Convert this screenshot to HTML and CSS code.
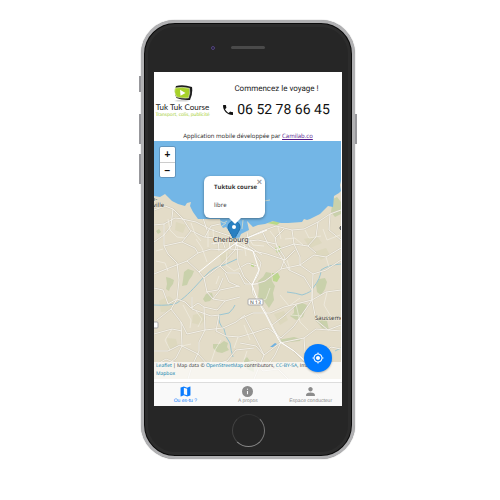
FILE: index.html
```html
<!DOCTYPE html>
<html lang="fr">
<head>
<meta charset="utf-8">
<meta name="viewport" content="width=device-width, initial-scale=1">
<title>Tuk Tuk Course</title>
<link rel="stylesheet" href="styles.css">
</head>
<body>
<div class="phone">
  <span class="side mute"></span><span class="side up"></span><span class="side down"></span><span class="side power"></span>
  <div class="top"><span class="camera"></span><span class="speaker"></span></div>
  <main class="screen">
    <header class="header">
      <div class="brand-row">
        <div class="logo">
          <svg class="logo-mark" viewBox="0 0 20 17" aria-hidden="true">
            <path d="M1 16Q9 13.500 17 16Q9 17 1 16Z" fill="#d4d4d4"/>
            <path d="M3 1Q10-1 19 2Q20 9 17 15Q9 15.500 3.500 13Q.5 7 3 1Z" fill="#1c1c1c"/>
            <path d="M2 3Q9 1.500 16.500 3.300Q17.500 8 15.500 13Q9 13.500 3.500 12Q.5 7 2 3Z" fill="#a7d129" stroke="#fff" stroke-width=".5"/>
            <path d="M7 4.800L12.500 8L7.500 10.700Z" fill="#fff"/>
          </svg>
          <span class="logo-name">Tuk Tuk Course</span>
          <span class="logo-tag">Transport, colis, publicité</span>
        </div>
        <div class="call">
          <p class="slogan">Commencez le voyage !</p>
          <a class="number" href="tel:0652786645"><svg class="call-icon" viewBox="3 3 18 18" aria-hidden="true"><path d="M6.620 10.790c1.440 2.830 3.760 5.140 6.590 6.590l2.200-2.200c.27-.27.67-.36 1.020-.24 1.120.37 2.330.57 3.570.57.55 0 1 .45 1 1V20c0 .55-.45 1-1 1C10.610 21 3 13.390 3 4c0-.55.45-1 1-1h3.500c.55 0 1 .45 1 1 0 1.250.2 2.450.57 3.570.11.35.03.74-.25 1.020z"/></svg>06 52 78 66 45</a>
        </div>
      </div>
      <p class="credit">Application mobile développée par <a href="#camilab">Camilab.co</a></p>
    </header>

    <section class="map" aria-label="Carte">
      <svg class="map-drawing" viewBox="154 141 187 238" preserveAspectRatio="xMidYMid slice">
        <rect x="154" y="141" width="187" height="238" fill="#e3dcc8"/>
        <g class="woods">
          <path d="M184 272l4-3 6 2-2 5-3 4-2 5-5 1 1-6z"/>
          <path d="M166 277l4 1 4 2-1 4-3 4-1 3-3-2 1-5z"/>
          <path d="M206 294l6-1 1 4-3 4-5 1-2-3z"/>
          <path d="M213 344l7 0 4-3 4 2-1 4 2 3-7 3-5-1-4-4z"/>
          <path d="M243 361l4-4 3 4 3-1 1 12-7-3z"/>
          <path d="M258 281l5-4 3-5 5 1 1 8 3 5-2 7 1 7-5 8-5-7-6-4 1-9z"/>
          <path d="M272 273l6 0 2 4-3 5-4-1z" fill="#bdd78f"/>
          <path d="M251 263l3 1 0 3-3-1z" fill="#b3d87b"/>
          <path d="M294 306l8-3 5 2-2 6-2 6-7 3-6-4 4-3z"/>
          <path d="M319 279l6-1 2 4-2 7-4 6-4-3-1-7z"/>
          <path d="M314 318l7-2 6 5 2 9-7-2z"/>
          <path d="M278 340l16-3 7 2-1 2-20 2z"/>
          <path d="M333 199l4-2 4 5v12l-6 3-4-5z"/>
          <path d="M275 248l5-2 1 5-4 2z" fill="#b9d987"/>
          <path d="M267 223l7-2 7 1-4 3z" fill="#b9d987"/>
          <path d="M156 231l3-2 2 3-3 2z"/>
        </g>
        <g class="fields">
          <path d="M159 301l10-5 7 6-5 9-10 1zM193 315l8-2 5 6-6 6-8-2zM274 314l10-3 4 9-8 5zM219 254l9-3 2 8-8 4zM304 239l13-3 5 7-12 5zM176 222l10 3-3 8-8-3zM314 252l12-4 4 7-9 5zM167 338l9 1 2 8-10 2z"/>
        </g>
        <g class="streams">
          <path d="M154 305Q170 306 177 303C188 295 193 289 204 277Q214 266 224 265L237 259"/>
          <path d="M219 315L229 313Q234 308 235 305M219 315Q218 324 224 329Q225 337 230 343Q231 351 233 357"/>
          <path d="M287 292Q296 293 302 295Q312 292 313 288Q321 278 321 270Q328 265 341 264M335 351L341 348"/>
        </g>
        <g class="road-edge">
          <path id="roads" d="M154 210L165 206L173 209L183 219L190 230L204 237L216 238L235 241L249 237L262 231L276 226L292 230L304 229L318 222L330 214L341 210
          M154 242L164 235L171 226L173 209M154 225L164 224L175 218L183 219M164 224L164 246L168 254L177 263L179 280L177 299L171 309L157 320
          M154 274L169 268L187 261L198 253L211 249L226 250L236 243M164 246L182 242L195 248L198 253M182 242L191 231M182 219L196 222L212 230L230 236
          M187 261L199 272L204 278L207 292L213 299L225 301L240 297M204 278L220 266L235 250L237 240M220 266L227 273L239 273L245 284L258 284
          M225 301L217 310L204 307L198 303L191 308L185 302L177 299L168 304M204 307L205 330L199 342L199 351L192 366L188 379
          M171 309L181 322L187 334L205 330L223 328L236 322L245 315M181 322L182 346L176 358L162 369M154 334L172 329L182 331M154 351L168 351L180 345L198 354L209 366L227 361L236 350L254 348
          M192 297L192 309L211 316L219 315L216 331L226 336L239 337L253 333L268 328L281 338L294 326L312 300L312 290L304 277L289 270L278 252L275 238L284 229
          M239 243L253 251L261 263L258 275L252 285L253 294L264 309L273 327L281 342L294 351L309 366L321 379
          M237 243L238 263L244 277L252 285M252 285L265 281L281 269L300 265L314 255L326 257L341 248M281 269L285 258L276 244L258 240L240 242
          M262 231L268 244L276 250L294 244L308 246L316 253M292 230L294 244L300 257L300 265M318 222L316 237L308 246M330 214L329 230L341 240
          M295 250L285 260L267 254L254 251M300 265L313 274L326 270L341 260M313 274L312 300L316 320L328 330L341 325
          M240 319L253 313L270 313L284 307L296 304L312 300L326 292L341 290M272 325L284 316L296 305M240 343L256 346L264 355L280 343L304 338L316 329L341 331
          M254 379L264 355L253 333L245 318M240 364L255 361L263 371L278 369L288 379M281 342L275 355L268 365M304 338L305 353L320 357L331 347L341 349
          M205 237L211 226L220 224M247 232L249 246L262 255M202 215L207 230M218 238L219 251M222 239L225 248M229 239L230 249L243 250M211 244L226 242
          M154 288L163 290L168 304M154 366L166 359L181 365L197 365M225 273L229 282L240 287M206 292L218 290L223 278M213 299L220 290L239 286M241 267L248 263L257 266"/>
          <path class="minor" d="M156 251L163 249M168 219L170 230L177 237L185 238M191 223L195 234L201 241M208 231L208 247M213 229L214 245M196 239L202 248L207 262M227 252L226 265L234 271L240 268M244 243L246 256M250 240L253 245L264 246M270 231L276 239M285 239L295 238L303 245M278 227L281 239M305 230L309 238L321 236M323 229L327 240L340 235M326 257L329 267M287 260L290 270M280 295L289 306L300 298M270 288L266 299L255 303M296 304L300 322L308 330M327 292L324 305L333 320M244 325L250 340M219 276L216 284M183 305L191 320L190 328M196 311L202 319L198 327M172 329L165 340L170 350M221 340L215 350L210 365M238 337L234 348M247 351L243 363M182 346L191 344M156 261L165 263L168 271M291 315L302 316"/>
        </g>
        <use href="#roads" class="road"/>
        <path class="main-road" d="M237 236L236 245L253 251L259 270L252 285L258 301L266 315L273 329L280 342L294 351L310 365M199 272L220 255L236 243L252 236L267 230"/>
        <path class="sea" d="M154 141H341V181L340 185L341 191L339 193L334 196L333 207L328 206L320 214L310 219L307 220L304 219L302 222L288 223L281 223L273 221L265 224L258 225L253 227L248 222L247 221L249 230L245 232L241 234L238 241L234 239L232 232L229 231L226 227L223 228L221 225L220 219H198L193 212L190 206L191 202L187 203L185 206L178 204L172 201L168 197L165 194L160 197L154 196Z"/>
        <path d="M220 221L224 223L227 221M222 226L226 223M229 231L231 223M243 220L242 229M264 201L270 200" stroke="#c7d5cd" fill="none"/>
        <path class="pond" d="M270 347L275 343L277 344L273 347Z"/>
        <path d="M339 228h4M340.500 226v4" stroke="#666"/>
        <g class="shields"><rect x="248" y="299" width="15" height="6" rx="1"/><rect x="151" y="322" width="7" height="6" rx="1"/></g>
        <g class="labels">
          <text class="shield" x="250" y="304">N 13</text>
          <text x="152" y="201">e-</text><text x="153" y="207">ville</text>
          <text x="315" y="320">Sausseme</text>
        </g>
        <path d="M228 227a6 6 0 0 1 12 0c0 4-4 7-6 14c-2-7-6-10-6-14z" fill="#2880c2" stroke="#1e6ea9"/>
        <circle cx="234" cy="227" r="2" fill="#fff"/>
        <text class="city" x="213" y="242">Cherbourg</text>
      </svg>
      <div class="zoom">
        <button type="button" aria-label="Zoom avant">+</button>
        <button type="button" aria-label="Zoom arrière">−</button>
      </div>
      <div class="popup">
        <strong>Tuktuk course</strong>
        <span>libre</span>
        <button class="close" type="button" aria-label="Fermer">×</button>
      </div>
      <p class="attribution"><a href="#leaflet">Leaflet</a> | Map data © <a href="#osm">OpenStreetMap</a> contributors, <a href="#license">CC-BY-SA</a>, Imagery ©<br><a href="#mapbox">Mapbox</a></p>
      <button class="locate" type="button" aria-label="Me localiser">
        <svg viewBox="0 0 24 24"><path d="M12 8c-2.210 0-4 1.790-4 4s1.790 4 4 4 4-1.790 4-4-1.790-4-4-4zm8.940 3A8.994 8.994 0 0 0 13 3.060V1h-2v2.060A8.994 8.994 0 0 0 3.060 11H1v2h2.060A8.994 8.994 0 0 0 11 20.940V23h2v-2.060A8.994 8.994 0 0 0 20.940 13H23v-2h-2.060zM12 19c-3.870 0-7-3.130-7-7s3.130-7 7-7 7 3.130 7 7-3.130 7-7 7z"/></svg>
      </button>
    </section>

    <nav class="tabs">
      <a class="tab active" href="#map"><svg viewBox="2 2 20 20" aria-hidden="true"><path d="M20.500 3l-.16.030L15 5.100 9 3 3.360 4.900c-.21.070-.36.250-.36.480V20.500c0 .28.22.5.5.5l.16-.03L9 18.900l6 2.100 5.640-1.900c.21-.07.36-.25.36-.48V3.500c0-.28-.22-.5-.5-.5zM15 19l-6-2.110V5l6 2.110V19z"/></svg>Ou es-tu ?</a>
      <a class="tab" href="#about"><svg viewBox="2 2 20 20" aria-hidden="true"><path d="M12 2a10 10 0 1 0 0 20a10 10 0 0 0 0-20zm1 15h-2v-6h2v6zm0-8h-2V7h2v2z"/></svg>A propos</a>
      <a class="tab" href="#driver"><svg viewBox="2 2 20 20" aria-hidden="true"><path d="M12 12c2.210 0 4-1.790 4-4s-1.790-4-4-4-4 1.790-4 4 1.790 4 4 4zm0 2c-2.670 0-8 1.340-8 4v2h16v-2c0-2.660-5.330-4-8-4z"/></svg>Espace conducteur</a>
    </nav>
  </main>
  <div class="bottom"><span class="home"></span></div>
</div>
</body>
</html>
```
FILE: styles.css
```css
* { box-sizing: border-box; }
body { margin: 0; padding: 20px 4px 20px 0; background: #fff; font-family: Roboto, "Liberation Sans", sans-serif; text-rendering: geometricPrecision; }
p { margin: 0; }
button { font: inherit; padding: 0; border: 0; cursor: pointer; }

.phone {
  position: relative;
  width: min(100%, 214px);
  margin: 0 auto;
  padding: 0 10px;
  border: 3px solid #b1b1b3;
  border-radius: 34px;
  background: #262626;
  box-shadow: inset 0 0 0 1px #0b0b0b, inset 0 0 0 4px #2c2c2c, 0 0 1px #777;
}
.side { position: absolute; left: -5px; width: 2px; background: #97979b; }
.mute { top: 53px; height: 16px; }
.up { top: 91px; height: 30px; }
.down { top: 131px; height: 30px; }
.power { top: 91px; left: auto; right: -5px; height: 30px; }

.top { display: grid; grid-template-columns: 1fr 34px 1fr; align-items: center; padding: 23px 0 22px; }
.camera { justify-self: end; width: 4px; height: 4px; margin-right: 16px; border: 1px solid #54447c; border-radius: 50%; background: #202038; }
.speaker { height: 3px; margin-bottom: 1px; border-radius: 2px; background: #4a4a4a; }
.bottom { display: flex; justify-content: center; padding: 8px 0 9px; }
.home { width: 33px; height: 33px; border: 1px solid; border-color: #333 #777 #888 #444; border-radius: 50%; }

.screen { display: flex; flex-direction: column; background: #fff; }
.header { padding: 12px 0 0; }
.brand-row { display: grid; grid-template-columns: 57px 1fr; }
.logo { display: flex; flex-direction: column; align-items: center; padding-top: 1px; white-space: nowrap; }
.logo-mark { width: 20px; height: 17px; }
.logo-name { color: #222; font: 8px/10px Lato, sans-serif; }
.logo-tag { color: #a7cf35; font: 5px/6px Lato, sans-serif; }
.call { display: flex; flex-direction: column; align-items: center; white-space: nowrap; color: #222; }
.slogan { font-size: 8px; line-height: 10px; }
.number { display: flex; align-items: center; gap: 4px; margin-top: 6px; color: #111; font-size: 14px; line-height: 20px; text-decoration: none; }
.call-icon { width: 10px; height: 10px; fill: currentColor; }
.credit { margin-top: 12px; color: #222; font: 6px/9px "Open Sans", sans-serif; text-align: center; }
.credit a { color: #551a8b; }

.map { position: relative; margin: 0 1px 3px 0; overflow: hidden; }
.map-drawing { display: block; width: 100%; height: auto; }
.woods { fill: #c9d1ab; }
.fields { fill: #d9d6b7; opacity: .6; }
.streams { fill: none; stroke: #9ac6d3; stroke-width: 1; }
.road-edge { fill: none; stroke: #cbc6b6; stroke-width: 2; stroke-linejoin: round; opacity: .6; }
.road-edge .minor { stroke: #f5f2e9; stroke-width: 1; }
.road { fill: none; stroke: #f3f0e8; stroke-width: 1; }
.main-road { fill: none; stroke: #fff; stroke-width: 1; }
.sea { fill: #73b6e6; }
.pond { fill: #6eb1e1; }
.shields { fill: #fff; stroke: #aaa; }
.labels, .city { fill: #333; font: 6px "Noto Sans", sans-serif; paint-order: stroke; stroke: #eee8d8; stroke-width: 1px; }
.labels .shield { font-size: 5px; stroke: none; }
.city { font-size: 7px; }

.zoom { position: absolute; top: 6px; left: 6px; width: 15px; border-radius: 2px; overflow: hidden; background: #fff; box-shadow: 0 0 0 1px #6295bd; }
.zoom button { display: block; width: 100%; height: 15px; background: #fff; color: #111; font: bold 10px/15px "Liberation Sans", sans-serif; }
.zoom button + button { border-top: 1px solid #ccc; }
.popup { position: absolute; top: 35px; left: 50px; display: flex; flex-direction: column; gap: 10px; width: 61px; padding: 7px 0 9px 10px; border-radius: 6px; background: #fff; box-shadow: 0 1px 3px #0006; color: #333; font: 6px/8px "Open Sans", sans-serif; white-space: nowrap; }
.popup::after { content: ""; position: absolute; top: 100%; left: 25px; border: 6px solid transparent; border-top-color: #fff; border-bottom: 0; }
.close { position: absolute; top: 2px; right: 3px; background: none; color: #999; font: bold 9px/8px "Liberation Sans", sans-serif; }
.attribution { position: absolute; right: 0; bottom: 0; left: 0; padding: 0 2px 1px; background: #ffffffb3; color: #333; font: 5px/8px "Open Sans", "Liberation Sans", sans-serif; white-space: nowrap; }
.attribution a { color: #0078a8; text-decoration: none; }
.locate { position: absolute; right: 9px; bottom: 7px; display: grid; place-items: center; width: 28px; height: 28px; border-radius: 50%; background: #007aff; box-shadow: 0 1px 2px #0004; }
.locate svg { width: 12px; height: 12px; fill: #fff; }

.tabs { display: grid; grid-template-columns: repeat(3, 1fr); border-top: 1px solid #ddd; background: #f9f9f9; }
.tab { display: flex; flex-direction: column; align-items: center; gap: 1px; padding: 3px 0 2px; color: #8c8c8c; font: 5px/6px "Liberation Sans", sans-serif; white-space: nowrap; text-decoration: none; }
.tab svg { width: 11px; height: 11px; fill: currentColor; }
.active { color: #0a7cff; }
```
